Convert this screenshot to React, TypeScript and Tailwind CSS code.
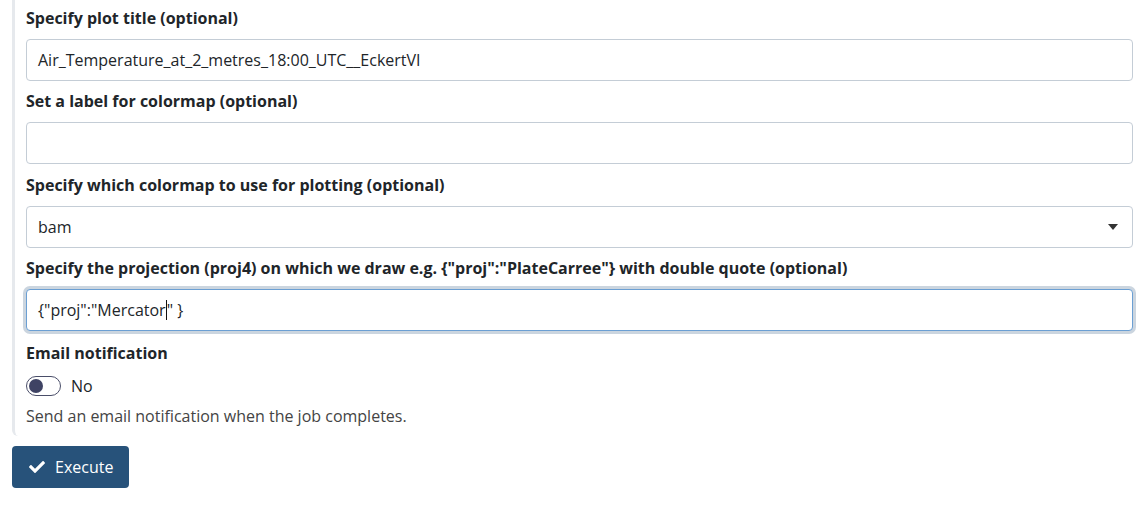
import { FaCheck } from "react-icons/fa";

const font = { fontFamily: '"Open Sans", "Noto Sans", sans-serif' };

function Field({ label, children }: { label: string; children: React.ReactNode }) {
  return (
    <div className="flex flex-col">
      <label className="h-6 mb-[9px] text-[16px] leading-6 font-bold text-[#212529]">{label}</label>
      {children}
    </div>
  );
}

function TextBox({ value }: { value?: string }) {
  return (
    <div className="h-[42px] rounded-[4px] border border-[#c4cdd6] bg-white px-[11px] flex items-center text-[16px] text-[#212529]">
      {value}
    </div>
  );
}

export default function App() {
  return (
    <div className="w-[1145px] h-[507px] bg-white" style={font}>
      <div className="ml-[12px] w-[1133px] border-l-[3px] border-[#e6e9ed] rounded-bl-[6px] pl-[11px] pr-[12px] pt-[6px] pb-[8px] flex flex-col gap-[8px]">
        <Field label="Specify plot title (optional)">
          <TextBox value="Air_Temperature_at_2_metres_18:00_UTC__EckertVI" />
        </Field>
        <Field label="Set a label for colormap (optional)">
          <TextBox />
        </Field>
        <div className="pt-px">
          <Field label="Specify which colormap to use for plotting (optional)">
            <div className="h-[42px] rounded-[4px] border border-[#c4cdd6] bg-white px-[11px] flex items-center justify-between text-[16px] text-[#212529]">
              <span>bam</span>
              <svg width="10" height="6" viewBox="0 0 10 6" className="mr-[3px]">
                <path d="M0 0 L10 0 L5 6 Z" fill="#333" />
              </svg>
            </div>
          </Field>
        </div>
        <Field label='Specify the projection (proj4) on which we draw e.g. {"proj":"PlateCarree"} with double quote (optional)'>
          <div className="h-[42px] rounded-[4px] border border-[#6b9fd3] ring-[3px] ring-[#cbd5df] bg-white px-[11px] flex items-center text-[16px] text-[#212529]">
            <span>{'{"proj":"Mercator'}</span>
            <span className="inline-block w-px h-[20px] bg-[#111]" />
            <span>{'" }'}</span>
          </div>
        </Field>
        <div className="flex flex-col pt-[2px]">
          <div className="h-6 text-[16px] leading-6 font-bold text-[#212529]">Email notification</div>
          <div className="mt-[9px] flex items-center gap-[10px] h-[24px]">
            <div className="w-[35px] h-[20px] rounded-full border border-[#4a4e69] bg-white flex items-center px-[2px]">
              <div className="w-[14px] h-[14px] rounded-full bg-[#3f4364]" />
            </div>
            <span className="text-[16px] text-[#212529]">No</span>
          </div>
          <div className="mt-[6px] text-[16px] leading-6 text-[#444]">Send an email notification when the job completes.</div>
        </div>
      </div>
      <button className="ml-[12px] mt-[10px] h-[42px] w-[117px] rounded-[4px] bg-[#27527a] text-white flex items-center gap-[10px] pl-[17px] text-[16px]">
        <FaCheck size={16} />
        <span>Execute</span>
      </button>
    </div>
  );
}
